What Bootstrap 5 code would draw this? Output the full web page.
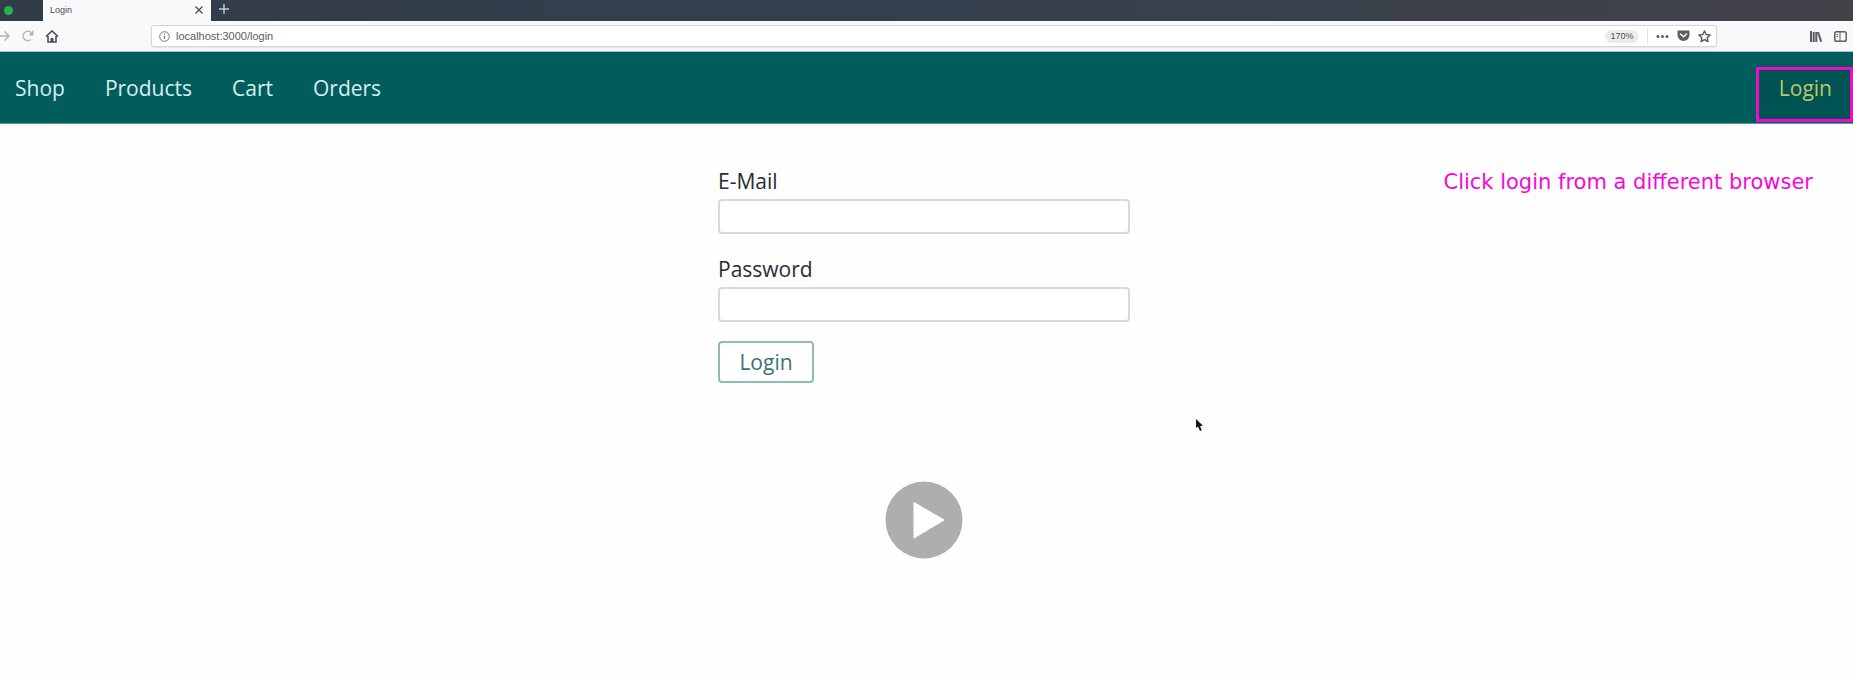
<!DOCTYPE html>
<html lang="en">
<head>
<meta charset="utf-8">
<meta name="viewport" content="width=device-width, initial-scale=1">
<title>Login</title>
<link href="https://cdn.jsdelivr.net/npm/bootstrap@5.3.0/dist/css/bootstrap.min.css" rel="stylesheet">
<style>
  body { font-family: "Open Sans", sans-serif; font-size: 21px; line-height: 28px; color: #2b2b33; background: #fefefe; }
  .chrome { font-family: "Liberation Sans", sans-serif; font-size: 11px; line-height: 16px; }
  .tab-strip { height: 21px; background: linear-gradient(90deg, #323c49, #343f4d 50%, #424249); }
  .dot { width: 9px; height: 9px; margin-left: 4px; background: #28b14c; }
  .tab { width: 168px; margin-left: 30px; padding: 0 8px 2px 7px; background: #f9f9fb; color: #4a4a4e; font-size: 9px; }
  .plain { border: 0; padding: 0; background: none; color: inherit; line-height: 0; }
  .new-tab { margin-left: 7px; color: #c8ccd2; }
  .tools { height: 31px; background: #f9f9fb; border-bottom: 1px solid #9cc7c7; color: #5c5c61; padding-right: 6px; }
  .nav-tools { width: 151px; gap: 10px; color: #b4b4b8; }
  .nav-tools .home { color: #4c4c50; }
  .address { height: 22px; margin-right: 93px; padding: 0 5px 0 7px; border: 1px solid #d6d6da; border-radius: 3px; background: #fff; box-shadow: 0 1px 2px #00000018; }
  .address input { border: 0; outline: 0; background: none; color: #5c5c61; width: 100%; padding: 0; margin-left: 6px; }
  .zoom-level { width: 34px; height: 13px; line-height: 13px; font-size: 9px; background: #ececef; color: #4c4c50; }
  .divider { width: 1px; height: 16px; background: #e2e2e5; }
  .site-bar { height: 72px; background: #005d5c; border-bottom: 1px solid #5d9c9b; padding-left: 15px; }
  .site-bar a { color: #d8efee; font-weight: 500; text-decoration: none; }
  .site-links { gap: 40px; }
  .site-bar .login-link { border: 3px solid #f408ca; background: #005353; color: #bdc765; padding: 4px 18px 17px 20px; margin-top: 15px; }
  .site-main { padding-right: 5px; }
  .login-form { width: 412px; max-width: 100%; padding-top: 43px; }
  .login-form label { font-weight: 500; display: block; margin-bottom: 4px; }
  .login-form .form-control { height: 35px; border: 2px solid #dadada; border-radius: 4px; background: #fff; }
  .login-form .form-control + label { margin-top: 21px; }
  .login-form .btn { width: 96px; height: 42px; margin-top: 19px; padding: 0; border: 2px solid #8fbab9; border-radius: 4px; color: #3a7474; background: #fff; font: inherit; font-weight: 500; }
  .play { margin-top: 98px; }
  .note { font-family: "DejaVu Sans", sans-serif; font-size: 21px; color: #f408d8; top: 44px; right: 40px; }
  .pointer { left: calc(50% + 268px); top: 295px; }
</style>
</head>
<body>
<header class="chrome">
  <div class="tab-strip d-flex align-items-stretch">
    <span class="dot rounded-circle align-self-center"></span>
    <div class="tab d-flex align-items-center justify-content-between">
      <span>Login</span>
      <button class="plain" aria-label="Close tab"><svg width="8" height="8" viewBox="0 0 8 8" stroke="currentColor" stroke-width="1.3"><path d="M.5.5l7 7M7.500.5l-7 7"/></svg></button>
    </div>
    <button class="plain new-tab pb-1" aria-label="New tab"><svg width="12" height="12" viewBox="0 0 12 12" stroke="currentColor" stroke-width="1.4"><path d="M6 1v10M1 6h10"/></svg></button>
  </div>
  <div class="tools d-flex align-items-center">
    <div class="nav-tools d-flex align-items-center flex-shrink-0">
      <button class="plain" aria-label="Forward"><svg width="11" height="12" viewBox="0 0 11 12" fill="none" stroke="currentColor" stroke-width="1.5"><path d="M0 6h9M4.500 1.500L9 6l-4.500 4.500"/></svg></button>
      <button class="plain" aria-label="Reload"><svg width="14" height="12" viewBox="0 0 14 12" fill="none" stroke="currentColor" stroke-width="1.5"><path d="M10 9.500A4.700 4.700 0 1 1 10 2.500"/><path d="M12.500 0v5.500H7.500z" fill="currentColor" stroke="none"/></svg></button>
      <button class="plain home" aria-label="Home"><svg width="14" height="13" viewBox="0 0 14 13" fill="none" stroke="currentColor" stroke-width="1.6"><path d="M1 6.500L7 1l6 5.500M3 6v6h8V6"/><path d="M5.500 12V8h3v4z" fill="currentColor" stroke="none"/></svg></button>
    </div>
    <div class="address d-flex align-items-center flex-grow-1">
      <svg class="flex-shrink-0" width="11" height="11" viewBox="0 0 11 11" fill="none" stroke="#77777c"><circle cx="5.500" cy="5.500" r="4.800"/><path d="M5.500 5v3M5.500 2.500v1.300" stroke-width="1.300"/></svg>
      <input aria-label="Address" value="localhost:3000/login">
      <span class="zoom-level rounded-pill text-center flex-shrink-0">170%</span>
      <span class="divider flex-shrink-0 ms-2 me-2"></span>
      <button class="plain" aria-label="Page actions"><svg width="13" height="5" viewBox="0 0 13 5" fill="currentColor"><circle cx="2" cy="2.500" r="1.500"/><circle cx="6.500" cy="2.500" r="1.500"/><circle cx="11" cy="2.500" r="1.500"/></svg></button>
      <button class="plain ms-2" aria-label="Save to Pocket"><svg width="13" height="12" viewBox="0 0 13 12"><path d="M1.500.5h10q1 0 1 1V5a6 6 0 0 1-12 0V1.500q0-1 1-1z" fill="currentColor"/><path d="M3.500 4l3 2.800L9.500 4" fill="none" stroke="#fff" stroke-width="1.500" stroke-linecap="round"/></svg></button>
      <button class="plain ms-2" aria-label="Bookmark"><svg width="13" height="13" viewBox="0 0 13 13" fill="none" stroke="currentColor" stroke-width="1.500" stroke-linejoin="round"><path d="M6.500 1l1.700 3.500 3.800.5-2.800 2.700.7 3.800-3.400-1.800-3.400 1.800.7-3.800L1 5l3.800-.5z"/></svg></button>
    </div>
    <button class="plain me-2" aria-label="Library"><svg class="me-1" width="12" height="11" viewBox="0 0 12 11" stroke="currentColor" stroke-width="2"><path d="M1 0v11M3.700 1v10M6.300 1v10M8 1l3.200 9.700"/></svg></button>
    <button class="plain" aria-label="Sidebar"><svg width="13" height="11" viewBox="0 0 13 11" fill="none" stroke="currentColor" stroke-width="1.500"><rect x=".8" y=".8" width="11.400" height="9.400" rx="1.800"/><path d="M6 1v9M2.500 3.500H4M2.500 5.500H4" stroke-width="1"/></svg></button>
  </div>
</header>
<nav class="site-bar d-flex justify-content-between" aria-label="Main">
  <div class="site-links d-flex align-items-center">
    <a href="#">Shop</a><a href="#">Products</a><a href="#">Cart</a><a href="#">Orders</a>
  </div>
  <a href="#" class="login-link align-self-start">Login</a>
</nav>
<main class="site-main position-relative">
  <form class="login-form mx-auto">
    <label for="email">E-Mail</label>
    <input class="form-control" type="email" id="email">
    <label for="password">Password</label>
    <input class="form-control" type="password" id="password">
    <button class="btn" type="submit">Login</button>
  </form>
  <div class="d-flex justify-content-center">
    <button class="plain play" aria-label="Play video"><svg width="78" height="78" viewBox="0 0 78 78"><circle cx="39" cy="39" r="38.500" fill="#aeaeae"/><path d="M29 21.500L59 39 29 57z" fill="#fff" stroke="#fff" stroke-linejoin="round"/></svg></button>
  </div>
  <p class="note position-absolute m-0">Click login from a different browser</p>
  <svg class="pointer position-absolute" width="9" height="12" viewBox="0 0 9 12" fill="#16161a"><path d="M1 0v9l2-1.500L5 12l1.800-.8L5 7l3-.3z"/></svg>
</main>
<script src="https://cdn.jsdelivr.net/npm/bootstrap@5.3.0/dist/js/bootstrap.bundle.min.js"></script>
</body>
</html>
